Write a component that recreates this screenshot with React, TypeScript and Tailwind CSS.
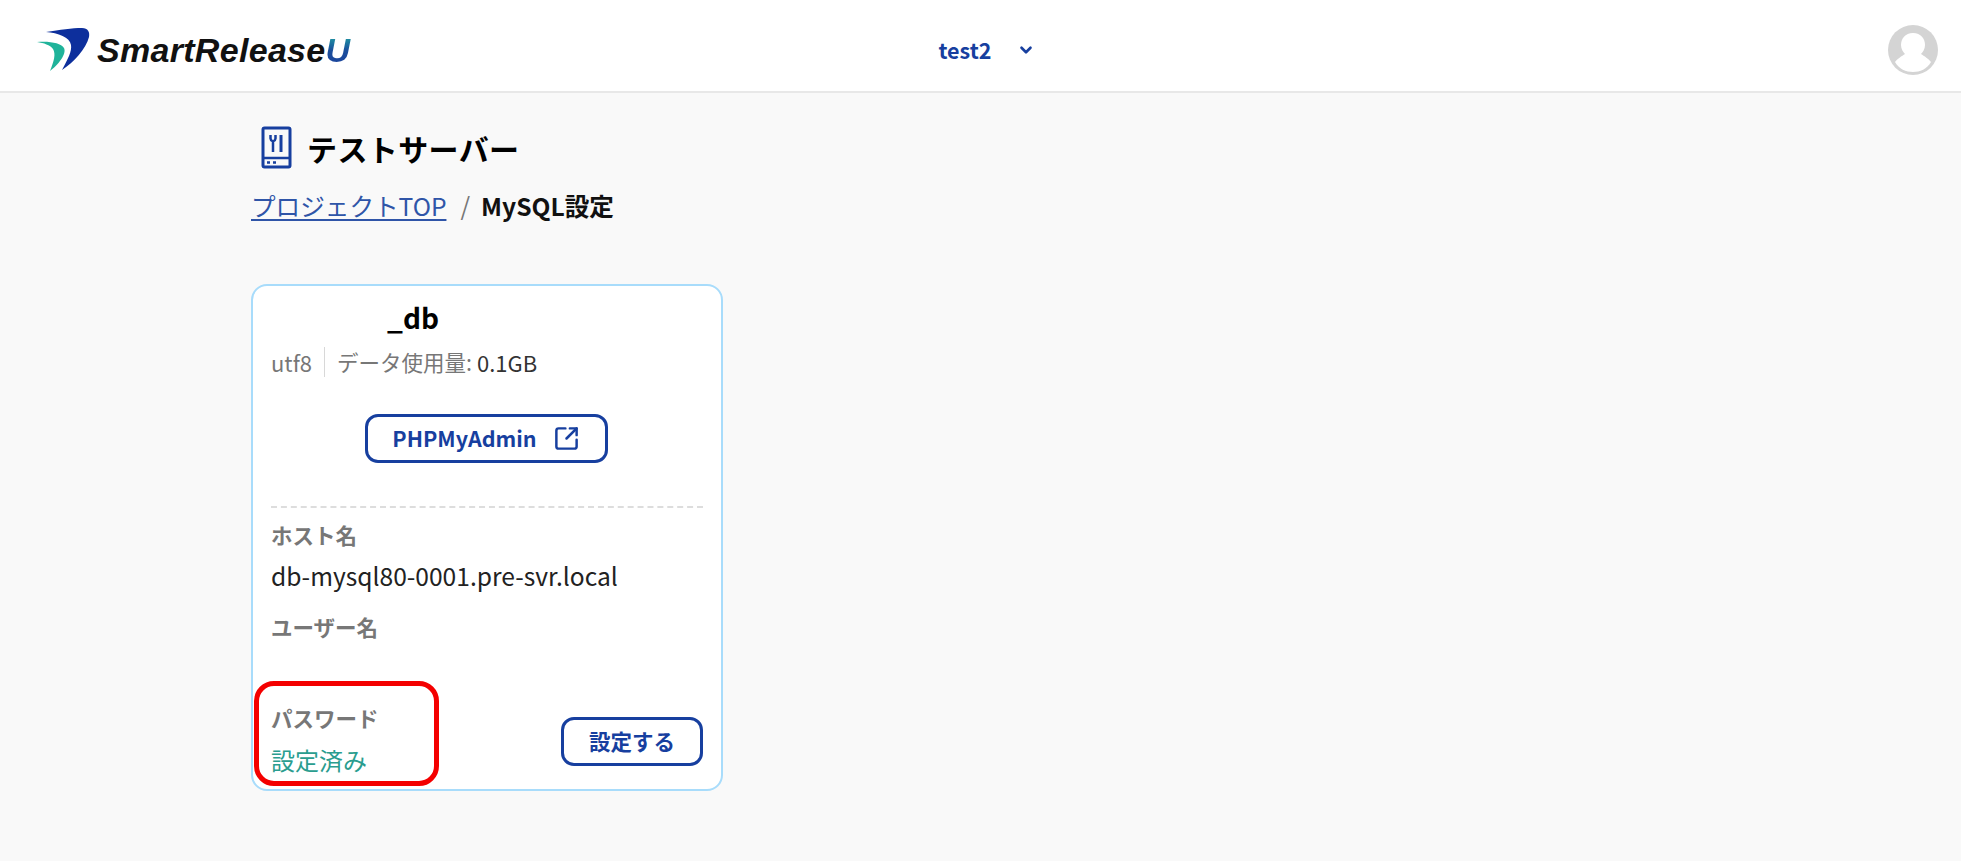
import { ChevronDown, SquareArrowOutUpRight } from "lucide-react"

const jpFont = "font-['Noto_Sans_CJK_JP','Noto_Sans',sans-serif]"

function LogoMark() {
  return (
    <svg width="60" height="50" viewBox="35 26 60 50" className="shrink-0">
      <path d="M46 33C60 31 72 29 82 29C88 29 90 33 89 38C86 50 74 63 62 71C68 60 72 52 71 46C70 38 58 34 46 33Z" fill="#0d2f9c" />
      <path d="M37 43C50 42 61 44 64 49C67 55 58 66 50 72C54 62 56 55 53 50C50 46 44 44 37 43Z" fill="#1fb39a" />
    </svg>
  )
}

function ServerIcon() {
  return (
    <svg width="32" height="44" viewBox="0 0 32 44" fill="none" stroke="#173f9f" className="shrink-0">
      <rect x="2" y="2" width="27" height="39" rx="1.5" strokeWidth="3" />
      <path d="M2 32H29" strokeWidth="2.5" />
      <path d="M9.500 9V12.500C9.500 14 11 15 12 15.500V26M14.500 9V12.500C14.500 14 13 15 12 15.500" strokeWidth="2.5" />
      <path d="M20 9V26" strokeWidth="3" />
      <path d="M6 36.500H9M12 36.500H15" strokeWidth="2.500" />
    </svg>
  )
}

function AvatarIcon() {
  return (
    <svg width="50" height="50" viewBox="0 0 50 50">
      <circle cx="25" cy="25" r="25" fill="#d4d4d4" />
      <path d="M25 8C33 8 37 14 37 20C37 24 35 27 33 29C36 31 41 34 43 37C39 44 32 47 25 47C18 47 11 44 7 37C9 34 14 31 17 29C15 27 13 24 13 20C13 14 17 8 25 8Z" fill="#fff" />
    </svg>
  )
}

function Label({ children }: { children: string }) {
  return <div className="text-[21.500px] leading-[30px] font-bold text-[#777777]">{children}</div>
}

export default function App() {
  return (
    <div className={`min-h-[861px] bg-[#f9f9f9] ${jpFont}`}>
      <header className="grid h-[93px] grid-cols-3 items-center border-b-2 border-[#e8e8e8] bg-white pt-[9px] pl-[35px] pr-[23px]">
        <div className="flex items-center gap-[2px]">
          <LogoMark />
          <span className="font-['Liberation_Sans',sans-serif] text-[34px] leading-none font-bold tracking-[0.3px] text-[#111111] italic">
            SmartRelease
            <span className="bg-gradient-to-b from-[#2fb5a0] via-[#1b4f9c] to-[#1b3f9c] bg-clip-text pr-[3px] text-transparent">U</span>
          </span>
        </div>
        <div className="flex items-center justify-center gap-[25px] text-[21.500px] font-bold text-[#173f9f]">
          <span>test2</span>
          <ChevronDown size={18} strokeWidth={3.5} />
        </div>
        <div className="flex justify-end">
          <AvatarIcon />
        </div>
      </header>

      <main className="pl-[251px]">
        <div className="flex items-center gap-[14px] pt-[33px] pl-[10px]">
          <ServerIcon />
          <h1 className="text-[30px] leading-[44px] font-bold tracking-[0.4px] text-black">テストサーバー</h1>
        </div>
        <nav className="mt-[17px] flex items-center text-[24.600px] leading-[36px]">
          <a className="text-[#2f55a8] underline underline-offset-[3px]">プロジェクトTOP</a>
          <span className="mr-[11px] ml-[14px] text-[#777777]">/</span>
          <span className="font-bold text-[#111111]">MySQL設定</span>
        </nav>

        <section className="relative mt-[61px] h-[507px] w-[472px] rounded-[16px] border-2 border-[#a8dcfb] bg-white px-[18px] pt-[10px]">
          <h2 className="pl-[116px] text-[28px] leading-[42px] font-bold text-black">_db</h2>
          <div className="mt-[9px] flex items-center text-[22px] leading-[30px] text-[#777777]">
            <span>utf8</span>
            <span className="mx-[12px] h-[30px] w-px bg-[#d8d8d8]" />
            <span className="text-[21.500px]">データ使用量:</span>
            <span className="ml-[5px] text-[#333333]">0.1GB</span>
          </div>
          <div className="mt-[37px] flex justify-center">
            <button className="mr-[2px] flex h-[49px] w-[243px] items-center justify-center gap-[16px] rounded-[13px] border-[3px] border-[#173f9f] bg-white text-[21.500px] font-bold text-[#173f9f]">
              PHPMyAdmin
              <SquareArrowOutUpRight size={27} strokeWidth={2.2} />
            </button>
          </div>
          <div className="mt-[43px] border-t-2 border-dashed border-[#dddddd]" />
          <div className="mt-[12px]">
            <Label>ホスト名</Label>
            <div className="mt-[8px] text-[24.600px] leading-[34px] text-[#222222]">db-mysql80-0001.pre-svr.local</div>
            <div className="mt-[20px]">
              <Label>ユーザー名</Label>
            </div>
          </div>
          <div className="mt-[61px] flex items-end justify-between">
            <div>
              <Label>パスワード</Label>
              <div className="mt-[9px] text-[24px] leading-[36px] text-[#2a9d8f]">設定済み</div>
            </div>
            <button className="mb-[12px] h-[49px] w-[142px] rounded-[13px] border-[3px] border-[#173f9f] bg-white text-[21.500px] font-bold text-[#173f9f]">
              設定する
            </button>
          </div>
          <div className="absolute top-[395px] left-[1px] h-[105px] w-[185px] rounded-[20px] border-[5px] border-[#f40000]" />
        </section>
      </main>
    </div>
  )
}
